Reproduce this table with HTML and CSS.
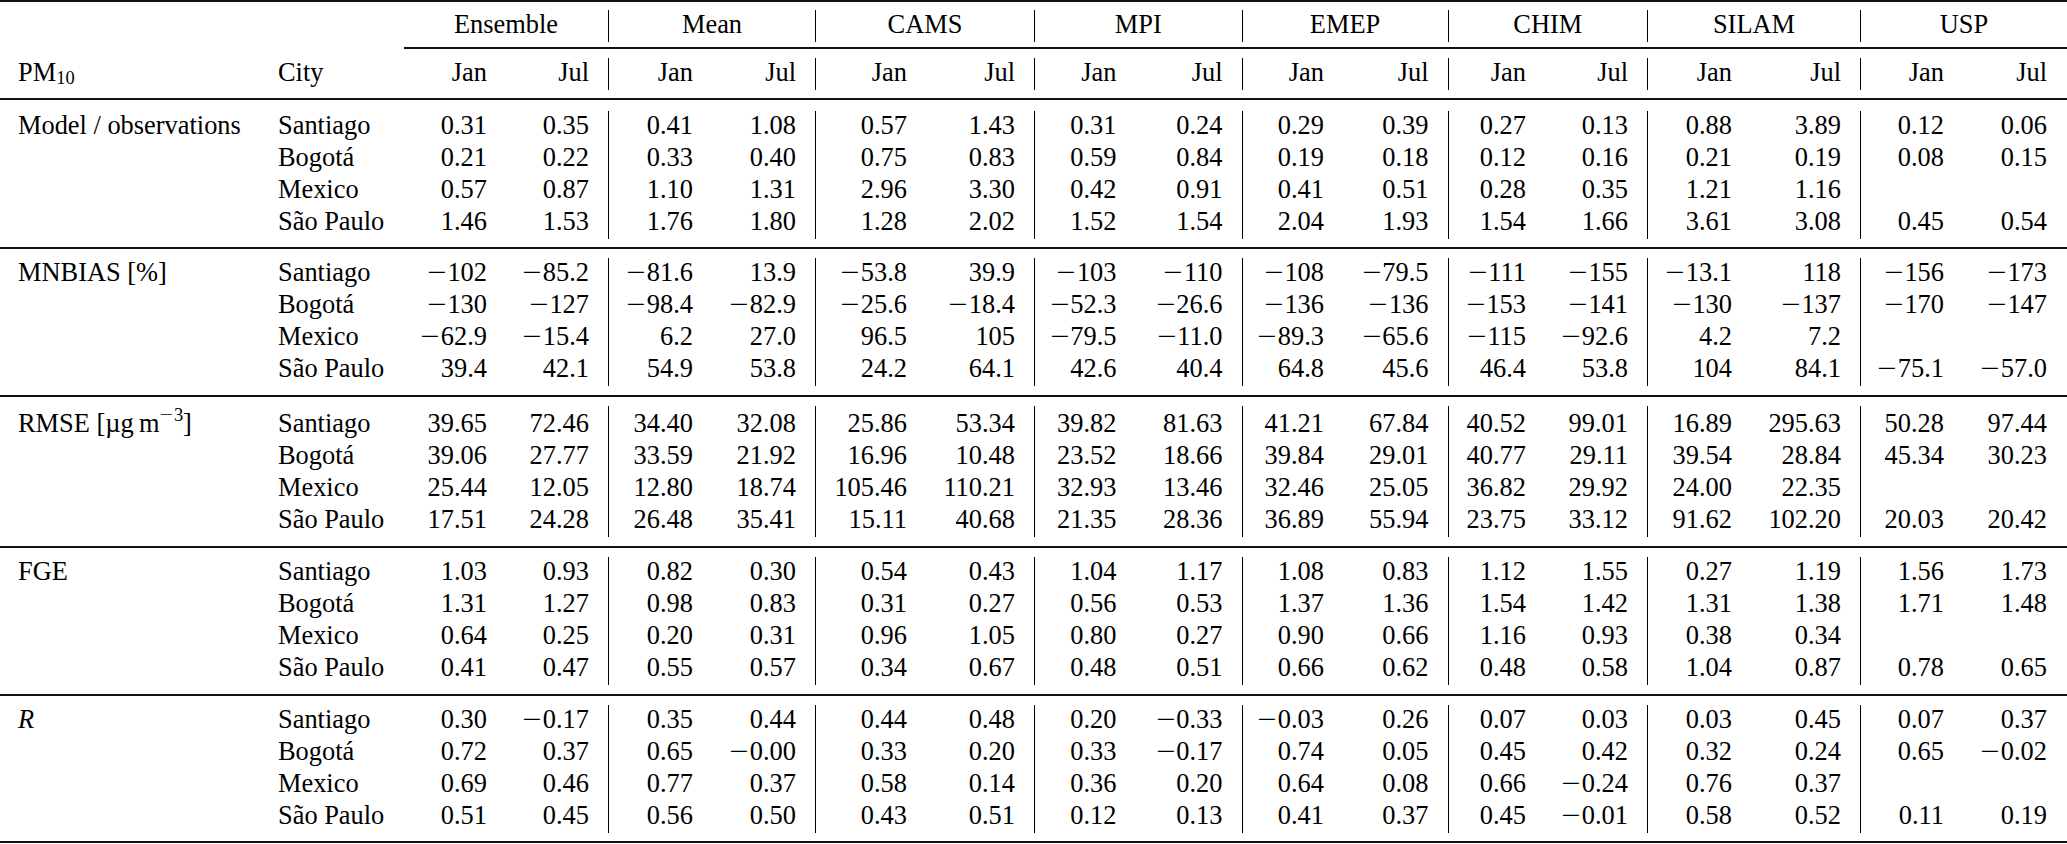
FILE: index.html
```html
<!DOCTYPE html>
<html lang="en">
<head>
<meta charset="utf-8">
<title>PM10 model statistics</title>
<link rel="stylesheet" href="styles.css">
</head>
<body>
<div class="tbl">
  <div class="rule r-top"></div>
  <div class="hg">
    <div></div>
    <div>Ensemble</div><div>Mean</div><div>CAMS</div><div>MPI</div><div>EMEP</div><div>CHIM</div><div>SILAM</div><div>USP</div>
  </div>
  <div class="rule r-cmid"></div>
  <div class="tr">
    <div>PM<span class="sub">10</span></div><div>City</div>
    <div>Jan</div><div>Jul</div><div>Jan</div><div>Jul</div><div>Jan</div><div>Jul</div><div>Jan</div><div>Jul</div>
    <div>Jan</div><div>Jul</div><div>Jan</div><div>Jul</div><div>Jan</div><div>Jul</div><div>Jan</div><div>Jul</div>
  </div>
  <div class="rule r-head"></div>

  <div class="tr">
    <div>Model / observations</div><div>Santiago</div>
    <div>0.31</div><div>0.35</div><div>0.41</div><div>1.08</div><div>0.57</div><div>1.43</div><div>0.31</div><div>0.24</div>
    <div>0.29</div><div>0.39</div><div>0.27</div><div>0.13</div><div>0.88</div><div>3.89</div><div>0.12</div><div>0.06</div>
  </div>
  <div class="tr">
    <div></div><div>Bogotá</div>
    <div>0.21</div><div>0.22</div><div>0.33</div><div>0.40</div><div>0.75</div><div>0.83</div><div>0.59</div><div>0.84</div>
    <div>0.19</div><div>0.18</div><div>0.12</div><div>0.16</div><div>0.21</div><div>0.19</div><div>0.08</div><div>0.15</div>
  </div>
  <div class="tr">
    <div></div><div>Mexico</div>
    <div>0.57</div><div>0.87</div><div>1.10</div><div>1.31</div><div>2.96</div><div>3.30</div><div>0.42</div><div>0.91</div>
    <div>0.41</div><div>0.51</div><div>0.28</div><div>0.35</div><div>1.21</div><div>1.16</div><div></div><div></div>
  </div>
  <div class="tr">
    <div></div><div>São Paulo</div>
    <div>1.46</div><div>1.53</div><div>1.76</div><div>1.80</div><div>1.28</div><div>2.02</div><div>1.52</div><div>1.54</div>
    <div>2.04</div><div>1.93</div><div>1.54</div><div>1.66</div><div>3.61</div><div>3.08</div><div>0.45</div><div>0.54</div>
  </div>
  <div class="rule r-mid"></div>

  <div class="tr">
    <div>MNBIAS [%]</div><div>Santiago</div>
    <div><span class="mi">−</span>102</div><div><span class="mi">−</span>85.2</div><div><span class="mi">−</span>81.6</div><div>13.9</div><div><span class="mi">−</span>53.8</div><div>39.9</div><div><span class="mi">−</span>103</div><div><span class="mi">−</span>110</div>
    <div><span class="mi">−</span>108</div><div><span class="mi">−</span>79.5</div><div><span class="mi">−</span>111</div><div><span class="mi">−</span>155</div><div><span class="mi">−</span>13.1</div><div>118</div><div><span class="mi">−</span>156</div><div><span class="mi">−</span>173</div>
  </div>
  <div class="tr">
    <div></div><div>Bogotá</div>
    <div><span class="mi">−</span>130</div><div><span class="mi">−</span>127</div><div><span class="mi">−</span>98.4</div><div><span class="mi">−</span>82.9</div><div><span class="mi">−</span>25.6</div><div><span class="mi">−</span>18.4</div><div><span class="mi">−</span>52.3</div><div><span class="mi">−</span>26.6</div>
    <div><span class="mi">−</span>136</div><div><span class="mi">−</span>136</div><div><span class="mi">−</span>153</div><div><span class="mi">−</span>141</div><div><span class="mi">−</span>130</div><div><span class="mi">−</span>137</div><div><span class="mi">−</span>170</div><div><span class="mi">−</span>147</div>
  </div>
  <div class="tr">
    <div></div><div>Mexico</div>
    <div><span class="mi">−</span>62.9</div><div><span class="mi">−</span>15.4</div><div>6.2</div><div>27.0</div><div>96.5</div><div>105</div><div><span class="mi">−</span>79.5</div><div><span class="mi">−</span>11.0</div>
    <div><span class="mi">−</span>89.3</div><div><span class="mi">−</span>65.6</div><div><span class="mi">−</span>115</div><div><span class="mi">−</span>92.6</div><div>4.2</div><div>7.2</div><div></div><div></div>
  </div>
  <div class="tr">
    <div></div><div>São Paulo</div>
    <div>39.4</div><div>42.1</div><div>54.9</div><div>53.8</div><div>24.2</div><div>64.1</div><div>42.6</div><div>40.4</div>
    <div>64.8</div><div>45.6</div><div>46.4</div><div>53.8</div><div>104</div><div>84.1</div><div><span class="mi">−</span>75.1</div><div><span class="mi">−</span>57.0</div>
  </div>
  <div class="rule r-mid"></div>

  <div class="tr tall">
    <div>RMSE [µg&thinsp;m<span class="sup"><span class="mi">−</span>3</span>]</div><div>Santiago</div>
    <div>39.65</div><div>72.46</div><div>34.40</div><div>32.08</div><div>25.86</div><div>53.34</div><div>39.82</div><div>81.63</div>
    <div>41.21</div><div>67.84</div><div>40.52</div><div>99.01</div><div>16.89</div><div>295.63</div><div>50.28</div><div>97.44</div>
  </div>
  <div class="tr">
    <div></div><div>Bogotá</div>
    <div>39.06</div><div>27.77</div><div>33.59</div><div>21.92</div><div>16.96</div><div>10.48</div><div>23.52</div><div>18.66</div>
    <div>39.84</div><div>29.01</div><div>40.77</div><div>29.11</div><div>39.54</div><div>28.84</div><div>45.34</div><div>30.23</div>
  </div>
  <div class="tr">
    <div></div><div>Mexico</div>
    <div>25.44</div><div>12.05</div><div>12.80</div><div>18.74</div><div>105.46</div><div>110.21</div><div>32.93</div><div>13.46</div>
    <div>32.46</div><div>25.05</div><div>36.82</div><div>29.92</div><div>24.00</div><div>22.35</div><div></div><div></div>
  </div>
  <div class="tr">
    <div></div><div>São Paulo</div>
    <div>17.51</div><div>24.28</div><div>26.48</div><div>35.41</div><div>15.11</div><div>40.68</div><div>21.35</div><div>28.36</div>
    <div>36.89</div><div>55.94</div><div>23.75</div><div>33.12</div><div>91.62</div><div>102.20</div><div>20.03</div><div>20.42</div>
  </div>
  <div class="rule r-mid"></div>

  <div class="tr">
    <div>FGE</div><div>Santiago</div>
    <div>1.03</div><div>0.93</div><div>0.82</div><div>0.30</div><div>0.54</div><div>0.43</div><div>1.04</div><div>1.17</div>
    <div>1.08</div><div>0.83</div><div>1.12</div><div>1.55</div><div>0.27</div><div>1.19</div><div>1.56</div><div>1.73</div>
  </div>
  <div class="tr">
    <div></div><div>Bogotá</div>
    <div>1.31</div><div>1.27</div><div>0.98</div><div>0.83</div><div>0.31</div><div>0.27</div><div>0.56</div><div>0.53</div>
    <div>1.37</div><div>1.36</div><div>1.54</div><div>1.42</div><div>1.31</div><div>1.38</div><div>1.71</div><div>1.48</div>
  </div>
  <div class="tr">
    <div></div><div>Mexico</div>
    <div>0.64</div><div>0.25</div><div>0.20</div><div>0.31</div><div>0.96</div><div>1.05</div><div>0.80</div><div>0.27</div>
    <div>0.90</div><div>0.66</div><div>1.16</div><div>0.93</div><div>0.38</div><div>0.34</div><div></div><div></div>
  </div>
  <div class="tr">
    <div></div><div>São Paulo</div>
    <div>0.41</div><div>0.47</div><div>0.55</div><div>0.57</div><div>0.34</div><div>0.67</div><div>0.48</div><div>0.51</div>
    <div>0.66</div><div>0.62</div><div>0.48</div><div>0.58</div><div>1.04</div><div>0.87</div><div>0.78</div><div>0.65</div>
  </div>
  <div class="rule r-mid"></div>

  <div class="tr">
    <div><i>R</i></div><div>Santiago</div>
    <div>0.30</div><div><span class="mi">−</span>0.17</div><div>0.35</div><div>0.44</div><div>0.44</div><div>0.48</div><div>0.20</div><div><span class="mi">−</span>0.33</div>
    <div><span class="mi">−</span>0.03</div><div>0.26</div><div>0.07</div><div>0.03</div><div>0.03</div><div>0.45</div><div>0.07</div><div>0.37</div>
  </div>
  <div class="tr">
    <div></div><div>Bogotá</div>
    <div>0.72</div><div>0.37</div><div>0.65</div><div><span class="mi">−</span>0.00</div><div>0.33</div><div>0.20</div><div>0.33</div><div><span class="mi">−</span>0.17</div>
    <div>0.74</div><div>0.05</div><div>0.45</div><div>0.42</div><div>0.32</div><div>0.24</div><div>0.65</div><div><span class="mi">−</span>0.02</div>
  </div>
  <div class="tr">
    <div></div><div>Mexico</div>
    <div>0.69</div><div>0.46</div><div>0.77</div><div>0.37</div><div>0.58</div><div>0.14</div><div>0.36</div><div>0.20</div>
    <div>0.64</div><div>0.08</div><div>0.66</div><div><span class="mi">−</span>0.24</div><div>0.76</div><div>0.37</div><div></div><div></div>
  </div>
  <div class="tr">
    <div></div><div>São Paulo</div>
    <div>0.51</div><div>0.45</div><div>0.56</div><div>0.50</div><div>0.43</div><div>0.51</div><div>0.12</div><div>0.13</div>
    <div>0.41</div><div>0.37</div><div>0.45</div><div><span class="mi">−</span>0.01</div><div>0.58</div><div>0.52</div><div>0.11</div><div>0.19</div>
  </div>
  <div class="rule r-bot"></div>
</div>
</body>
</html>
```

FILE: styles.css
```css
html, body {
  margin: 0;
  padding: 0;
  background: #ffffff;
}

body {
  font-family: "Liberation Serif", "Times New Roman", serif;
  font-size: 26.4px;
  color: #000000;
  overflow: hidden;
}

.tbl {
  display: grid;
  width: 2067px;
  grid-template-columns:
    262px 142px
    99px 106px
    100px 107px
    107px 112px
    97.5px 110px
    97.5px 108.5px
    93.5px 106px
    100px 113px
    99px 107px;
}

/* horizontal rules (booktabs style) */
.rule {
  grid-column: 1 / -1;
  height: 2px;
  background: #111111;
}

.r-top {
  margin-bottom: 8px;
}

.r-cmid {
  grid-column: 3 / -1;
  margin: 5px 0 9px;
}

.r-head {
  margin: 8px 0 10.5px;
}

.r-mid {
  margin: 8.7px 0 9px;
}

.r-bot {
  margin-top: 8.7px;
}

/* group header row */
.hg {
  display: contents;
}

.hg > div {
  grid-column: span 2;
  box-sizing: border-box;
  height: 32px;
  line-height: 28.2px;
  padding-bottom: 3.8px;
  text-align: center;
  white-space: nowrap;
}

.hg > div:not(:first-child):not(:last-child) {
  border-right: 1px solid #000000;
}

/* body rows */
.tr {
  display: contents;
}

.tr > div {
  box-sizing: border-box;
  height: 32px;
  line-height: 28.2px;
  padding-bottom: 3.8px;
  padding-right: 16px;
  text-align: right;
  white-space: nowrap;
}

.tr > div:nth-child(1) {
  text-align: left;
  padding-left: 18px;
  padding-right: 0;
}

.tr > div:nth-child(2) {
  text-align: left;
  padding-left: 16px;
  padding-right: 0;
}

.tr > div:nth-child(2n+4) {
  padding-right: 19px;
  border-right: 1px solid #000000;
}

.tr > div:nth-child(18) {
  padding-right: 20px;
  border-right: 0;
}

.tall > div {
  height: 35.3px;
  padding-top: 3.3px;
}

/* math-like pieces */
.mi {
  display: inline-block;
  width: 0.78em;
  text-align: center;
  transform: scaleX(1.3);
}

.sub {
  font-size: 0.7em;
  line-height: 0;
  vertical-align: -2.5px;
}

.sup {
  font-size: 0.7em;
  line-height: 0;
  vertical-align: 11px;
}
```
